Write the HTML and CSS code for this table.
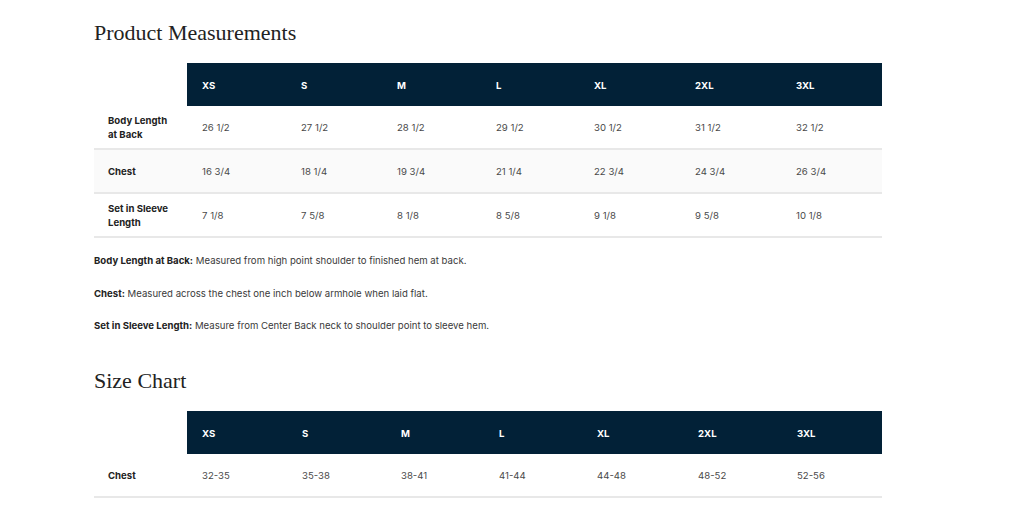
FILE: index.html
```html
<!DOCTYPE html>
<html>
<head>
<meta charset="utf-8">
<link rel="stylesheet" href="styles.css">
</head>
<body>
<div class="page">
  <h2 class="title">Product Measurements</h2>
  <table class="chart measurements">
    <colgroup>
      <col class="c0"><col class="c1"><col class="c2"><col class="c3"><col class="c4"><col class="c5"><col class="c6"><col class="c7">
    </colgroup>
    <thead>
      <tr><th class="blank"></th><th>XS</th><th>S</th><th>M</th><th>L</th><th>XL</th><th>2XL</th><th>3XL</th></tr>
    </thead>
    <tbody>
      <tr><td class="label">Body Length<br>at Back</td><td>26 1/2</td><td>27 1/2</td><td>28 1/2</td><td>29 1/2</td><td>30 1/2</td><td>31 1/2</td><td>32 1/2</td></tr>
      <tr class="alt"><td class="label">Chest</td><td>16 3/4</td><td>18 1/4</td><td>19 3/4</td><td>21 1/4</td><td>22 3/4</td><td>24 3/4</td><td>26 3/4</td></tr>
      <tr><td class="label">Set in Sleeve<br>Length</td><td>7 1/8</td><td>7 5/8</td><td>8 1/8</td><td>8 5/8</td><td>9 1/8</td><td>9 5/8</td><td>10 1/8</td></tr>
    </tbody>
  </table>
  <div class="notes">
    <p><strong>Body Length at Back:</strong> Measured from high point shoulder to finished hem at back.</p>
    <p><strong>Chest:</strong> Measured across the chest one inch below armhole when laid flat.</p>
    <p><strong>Set in Sleeve Length:</strong> Measure from Center Back neck to shoulder point to sleeve hem.</p>
  </div>
  <h2 class="title second">Size Chart</h2>
  <table class="chart sizes">
    <colgroup>
      <col class="c0"><col class="c1"><col class="c2"><col class="c3"><col class="c4"><col class="c5"><col class="c6"><col class="c7">
    </colgroup>
    <thead>
      <tr><th class="blank"></th><th>XS</th><th>S</th><th>M</th><th>L</th><th>XL</th><th>2XL</th><th>3XL</th></tr>
    </thead>
    <tbody>
      <tr><td class="label">Chest</td><td>32-35</td><td>35-38</td><td>38-41</td><td>41-44</td><td>44-48</td><td>48-52</td><td>52-56</td></tr>
    </tbody>
  </table>
</div>
</body>
</html>
```
FILE: styles.css
```css
html, body {
  margin: 0;
  padding: 0;
  background: #ffffff;
}
.page {
  padding: 18px 0 0 94px;
  width: 788px;
  font-family: Inter, "Noto Sans", sans-serif;
  font-size: 9.6px;
  color: #444444;
}
.title {
  font-family: "Liberation Serif", "DejaVu Serif", serif;
  font-weight: 400;
  font-size: 22px;
  line-height: 30px;
  color: #222222;
  margin: 0 0 15px 0;
}
.title.second {
  margin-top: 23px;
}
.chart {
  width: 788px;
  border-collapse: collapse;
  table-layout: fixed;
}
.chart .c0 { width: 93px; }
.measurements .c1 { width: 99px; }
.measurements .c2 { width: 96px; }
.measurements .c3 { width: 99px; }
.measurements .c4 { width: 98px; }
.measurements .c5 { width: 101px; }
.measurements .c6 { width: 101px; }
.measurements .c7 { width: 101px; }
.sizes .c1 { width: 100px; }
.sizes .c2 { width: 99px; }
.sizes .c3 { width: 98px; }
.sizes .c4 { width: 98px; }
.sizes .c5 { width: 101px; }
.sizes .c6 { width: 99px; }
.sizes .c7 { width: 100px; }
.chart th {
  background: #022137;
  color: #ffffff;
  font-weight: 700;
  text-align: left;
  height: 41px;
  padding: 2px 0 0 15px;
}
.chart th.blank {
  background: #ffffff;
  padding: 0;
}
.chart td {
  height: 40px;
  padding: 2px 0 0 15px;
  border-bottom: 2px solid #e8e8e8;
  color: #4a4a4a;
  line-height: 14px;
}
.chart td.label {
  padding-left: 14px;
  font-weight: 700;
  color: #222222;
}
.chart tr.alt td {
  background: #fafafa;
}
.notes {
  color: #3a3a3a;
  padding-top: 7px;
}
.notes p {
  margin: 0;
  line-height: 32.5px;
}
.notes strong {
  color: #222222;
}
```
